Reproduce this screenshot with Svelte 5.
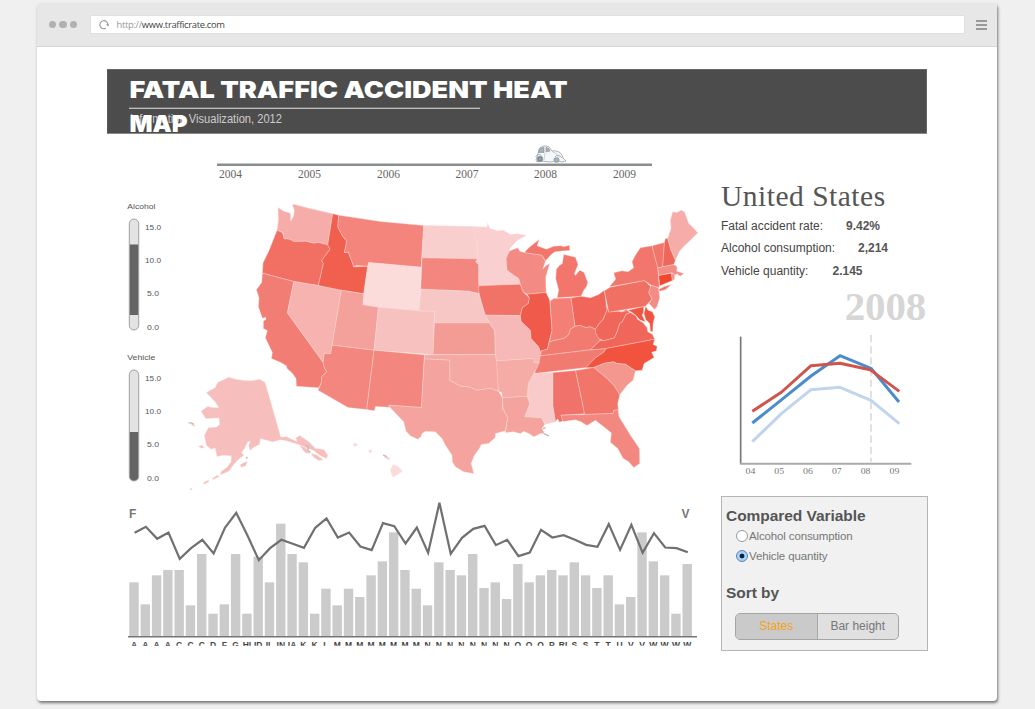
<script>
  // Each state: fill, x offset, y offset, outline points (thirds of a pixel).
  const states = [
    ['#f6adaa', 0, 0, '83,37 100,48 120,54 121,78 130,62 132,44 126,30 130,27 170,38 247,56 232,149 205,142 190,144 165,138 130,139 118,132 101,131 98,112 80,105 84,75'],
    ['#f27063', 0, 0, '80,105 96,112 101,131 118,132 130,139 165,138 190,144 205,142 232,149 239,162 214,196 219,205 204,271 130,259 36,234 38,203 55,168'],
    ['#f27d74', 0, 0, '36,234 130,259 111,353 218,501 222,518 229,530 214,544 213,562 205,578 138,573 137,550 126,534 110,520 108,512 90,501 63,490 66,472 45,428 51,406 39,400 39,378 47,372 46,366 36,369 24,335 26,308 18,284 34,262'],
    ['#f7b3af', 0, 0, '130,259 204,271 273,285 245,450 241,476 222,474 218,501 111,353'],
    ['#f15f4f', 0, 0, '247,56 265,60 262,95 276,122 289,138 282,172 294,171 303,195 310,215 352,213 340,296 273,285 204,271 219,205 214,196 239,162 232,149'],
    ['#f3857d', 0, 0, '265,60 390,79 520,91 512,216 355,202 352,213 318,211 310,215 303,195 294,171 282,172 289,138 276,122 262,95'],
    ['#fbdcda', 0, 0, '355,202 512,216 506,347 384,336 337,329 340,296 352,213'],
    ['#f4a19b', 0, 0, '273,285 340,296 337,329 384,336 371,465 245,450'],
    ['#f6c1be', 0, 0, '384,336 506,347 552,348 548,478 371,465'],
    ['#f3877f', 0, 0, '245,450 371,465 349,643 293,637 203,585 213,562 214,544 229,530 222,518 218,501 222,474 241,476'],
    ['#f3867e', 0, 0, '371,465 522,479 513,637 415,630 418,636 375,634 372,647 349,643'],
    ['#f9cfce', 0, 0, '520,91 668,94 680,150 682,191 515,188'],
    ['#f3877f', 0, 0, '515,188 682,191 676,200 685,208 686,295 670,292 655,288 511,282'],
    ['#f7c7c5', 0, 0, '511,282 655,288 670,292 686,295 693,320 703,355 717,383 552,383 552,348 506,347'],
    ['#f39c95', 0, 0, '552,383 717,383 724,394 733,405 735,478 548,478'],
    ['#f5a8a4', 0, 0, '522,479 735,478 741,500 744,588 720,579 702,582 680,585 655,575 630,573 612,563 598,556 598,495 522,491'],
    ['#f4a39e', 0, 0, '522,491 598,495 598,556 612,563 630,573 655,575 680,585 702,582 720,579 744,588 756,607 757,640 772,667 765,707 735,715 734,728 714,745 692,748 688,758 672,780 662,805 670,835 640,830 615,815 606,800 605,780 585,750 575,730 555,710 525,708 515,715 512,724 502,732 480,722 467,708 460,680 420,638 415,630 513,637'],
    ['#f9d0cf', 630, 0, '38,94 80,96 82,84 88,100 110,107 128,105 150,118 172,116 197,121 170,136 148,160 147,168 137,190 140,225 163,242 175,250 180,267 55,272 55,208 46,200 52,190 50,150 42,120'],
    ['#f17267', 630, 0, '55,272 180,267 188,290 207,308 204,325 186,337 180,361 75,360 63,320 55,290'],
    ['#f7b9b7', 630, 0, '75,360 180,361 182,378 210,405 212,430 235,455 243,478 236,500 222,505 220,490 108,497 105,478 103,405 94,394 87,383'],
    ['#f38b84', 630, 0, '147,168 160,162 172,158 178,168 192,172 245,180 255,198 247,222 256,212 268,205 256,245 257,292 200,297 188,290 180,267 175,250 163,242 140,225 137,190'],
    ['#f2766b', 630, 0, '192,172 205,158 236,133 230,152 258,162 280,153 302,152 310,155 327,150 328,166 310,167 283,170 270,180 262,190 255,197 245,180'],
    ['#f2766b', 630, 0, '310,178 345,186 353,208 342,235 345,241 358,225 371,232 382,262 378,275 370,285 362,303 290,308 295,285 286,250 288,222 297,211 306,205'],
    ['#f05a4a', 630, 0, '200,297 257,292 268,315 275,405 266,440 261,462 243,467 243,478 235,455 212,430 210,405 182,378 180,361 186,337 204,325 207,308'],
    ['#f37f77', 630, 0, '269,318 280,310 332,308 344,393 330,402 325,419 310,430 290,434 267,440 275,405'],
    ['#f1665a', 630, 0, '332,308 362,303 390,308 415,298 432,285 440,345 428,373 418,383 405,402 390,395 375,397 360,391 344,393'],
    ['#f27b71', 630, 0, '267,440 290,434 310,430 325,419 330,402 344,393 360,391 375,397 390,395 405,402 408,415 420,435 390,464 240,482 243,467 261,462'],
    ['#f27b71', 630, 0, '240,482 390,464 437,460 430,471 405,488 378,517 222,535 227,520 236,500'],
    ['#f1665a', 630, 0, '437,330 445,350 472,348 484,350 498,344 508,352 497,357 486,380 478,385 471,408 462,428 430,437 415,430 405,411 405,402 418,383 428,373 440,345'],
    ['#f1665a', 630, 0, '390,464 420,435 430,437 462,428 471,408 478,385 486,380 497,357 510,352 526,362 532,373 548,383 560,398 562,410 576,417 583,432 437,460'],
    ['#f15440', 630, 0, '484,350 550,334 549,352 545,360 555,380 538,374 528,362 514,351 498,344'],
    ['#f15440', 630, 0, '556,333 563,345 576,350 583,365 578,385 577,410 570,408 568,385 556,373 551,355'],
    ['#f1533e', 630, 375, '437,85 583,57 578,73 590,78 588,92 574,96 581,112 551,130 545,150 525,152 495,132 470,130 460,125 432,129 400,142 376,143 405,113 430,96'],
    ['#f4978f', 630, 375, '400,142 432,129 460,125 470,130 495,132 525,152 518,180 500,195 478,224 460,195 440,175'],
    ['#f2756a', 630, 375, '345,151 400,142 440,175 460,195 478,224 472,250 474,270 460,270 458,280 372,283 366,250'],
    ['#f1726a', 630, 375, '277,157 345,151 366,250 372,281 302,285 308,302 297,306 292,296 285,305 277,255'],
    ['#f8cbca', 630, 375, '220,160 277,157 277,255 285,305 255,312 243,293 193,290 208,250 200,225 204,190'],
    ['#f5aba6', 630, 375, '108,122 220,115 222,128 238,127 220,160 204,190 200,228 126,233 124,217 114,213'],
    ['#f4a39e', 630, 375, '126,233 200,228 208,250 193,290 243,293 253,312 245,325 252,340 240,340 220,350 207,341 190,333 180,340 160,335 135,337 142,293 128,265'],
    ['#f38880', 630, 375, '302,285 372,283 458,280 460,270 473,268 476,290 510,345 537,385 538,430 520,442 505,425 488,414 472,385 450,366 453,338 430,320 405,300 380,316 362,305 345,299 308,304'],
    ['#f17064', 630, 0, '432,287 449,276 552,256 572,275 565,292 575,312 555,333 445,351'],
    ['#f2766b', 630, 0, '447,275 466,252 460,233 485,227 503,230 520,218 515,200 525,180 540,158 575,152 592,215 594,240 597,278 572,270 552,256'],
    ['#f2766b', 630, 0, '595,283 612,274 632,268 616,283 598,288'],
    ['#f38c85', 630, 0, '572,270 594,278 598,308 590,334 583,343 566,325 575,312 565,292'],
    ['#f1756a', 630, 0, '575,152 612,142 607,215 592,218'],
    ['#f1665a', 630, 0, '612,142 615,130 622,130 632,165 645,195 640,208 607,215'],
    ['#f6adaa', 630, 0, '622,130 632,100 630,75 637,50 650,52 662,45 672,50 685,85 698,97 712,113 690,135 672,152 657,168 645,195 632,165'],
    ['#f38e87', 630, 0, '592,218 640,208 650,215 649,228 670,235 660,243 649,236 643,240 635,233 595,241'],
    ['#f0472f', 630, 0, '595,241 633,234 636,256 598,272'],
    ['#f38e87', 630, 0, '633,234 643,238 642,253 636,256'],
    ['#f6bfbd', -210, 510, '78,82 104,68 112,52 145,36 165,42 190,46 215,47 238,42 254,52 278,135 301,216 318,215 350,230 347,218 358,211 385,230 405,250 430,253 442,270 438,280 418,270 400,256 378,248 355,238 335,232 315,226 300,224 277,230 240,220 237,238 220,246 209,256 205,240 210,228 202,230 192,250 183,262 190,270 170,286 158,300 145,318 120,329 122,320 140,306 152,290 153,272 128,270 110,274 104,248 92,252 78,240 72,210 84,188 108,186 118,178 116,158 76,160 62,138 82,124 98,128 116,128 104,110'],
    ['#f6bfbd', -210, 510, '180,298 200,288 196,302 182,306'],
    ['#f6bfbd', -210, 510, '95,341 110,330 117,334 98,343'],
    ['#f6bfbd', -210, 510, '68,353 84,345 86,349 72,357'],
    ['#f6bfbd', -210, 510, '54,244 64,240 72,246 64,249'],
    ['#f6bfbd', -210, 510, '358,242 376,248 388,266 374,262'],
    ['#f6bfbd', -210, 510, '392,264 410,270 428,284 415,286 400,276'],
    ['#f6bfbd', -210, 510, '32,176 40,178 45,183 37,182'],
    ['#fadcdc', -210, 510, '630,316 638,298 652,303 666,318 638,336'],
    ['#f9d5d5', -210, 510, '517,239 524,234 532,239 525,243'],
    ['#f9d5d5', -210, 510, '565,256 572,254 574,261 568,263'],
    ['#f9d5d5', -210, 510, '610,275 620,274 630,280 622,284']
  ];

  const labels = 'A A A A C C C D F G HI ID IL IN IA K K L M M M M M M M M N N N N N N N N O O O P RI S S T T U V V W W W W'.split(' ');
  const bars = [262,328,241,225,225,331,177,356,328,177,356,185,262,86,177,202,356,281,331,281,306,241,199,112,225,281,331,202,225,241,177,279,262,312,207,262,241,225,241,202,241,279,241,328,306,112,199,241,356,207];
  const trend = [112,94,130,111,190,158,133,174,97,52,120,194,158,133,145,157,97,69,126,111,153,164,83,92,144,96,172,22,175,127,100,91,149,133,182,171,103,126,119,133,148,154,86,163,88,172,113,156,158,170];
  const bx = (i) => 134 + i * 11.29;
  const by = (v) => 495 + v / 3;
  const trendPoints = trend.map((v, i) => `${bx(i) + 0.6},${by(v) + 0.5}`).join(' ');

  const years = [[2004, 219], [2005, 298], [2006, 377], [2007, 455.5], [2008, 534], [2009, 613]];
  const sliders = [
    { name: 'Alcohol', y: 209, top: 219, from: 244.5, to: 314 },
    { name: 'Vehicle', y: 360, top: 370, from: 432, to: 480 }
  ];
  const ticks = ['15.0', '10.0', '5.0', '0.0'];
  const shortYears = ['04', '05', '06', '07', '08', '09'];
  let variable = $state('vehicle');
</script>

<div class="window">
  <div class="chrome">
    <div class="dots"><i></i><i></i><i></i></div>
    <div class="address">
      <svg width="10" height="10" viewBox="0 0 10 10"><path d="M6.8 8.2A4 4 0 1 1 8.9 4.6" fill="none" stroke="#999" stroke-width="1.1" /><path d="M7 4.3h3.4L8.8 6.6z" fill="#999" /></svg>
      <span class="url"><span>http://</span>www.trafficrate.com</span>
    </div>
    <div class="menu"><i></i><i></i><i></i></div>
  </div>

  <div class="content">
    <svg class="banner" width="820" height="65" viewBox="107 69 820 65">
      <defs>
        <pattern id="grain" width="4" height="4" patternUnits="userSpaceOnUse">
          <rect width="4" height="4" fill="#4c4c4c" /><path d="M0 3h1v1H0zM2 1h1v1H2z" fill="#505050" />
        </pattern>
      </defs>
      <rect x="107" y="69" width="820" height="64.5" fill="url(#grain)" />
      <rect x="107" y="69.3" width="819.6" height="64" fill="none" stroke="#777" stroke-width=".6" />
      <path d="M129 108.3H480" stroke="#e2e2e2" stroke-width="1.1" />
      <text x="130" y="122.5" class="sub" textLength="152" lengthAdjust="spacingAndGlyphs">Information Visualization, 2012</text>
      <text x="129.5" y="97.7" class="title" textLength="438" lengthAdjust="spacingAndGlyphs">FATAL TRAFFIC ACCIDENT HEAT</text>
      <text x="129.5" y="131.5" class="title" textLength="58" lengthAdjust="spacingAndGlyphs">MAP</text>
    </svg>

    <div class="columns">
      <div class="left">
        <svg class="timeline" width="606" height="56" viewBox="107 134 606 56">
          <path d="M217 164.7H652" stroke="#8b8e8e" stroke-width="2.6" />
          {#each years as [year, x]}
            <text {x} y="178" class="year" textLength="23" lengthAdjust="spacingAndGlyphs">{year}</text>
          {/each}
          <g stroke="#8d989f" stroke-width=".7" fill="#fff">
            <path d="M536 160l2-6 1-5q4-5 10-2l3 4q7-1 10 4l1 3 3 3-4 1-4-1-8 1-10-1-3 1z" fill="#f6f7f8" />
            <path d="M538.5 152.5l1.5-4q3-1.5 4-1v5zM546 147.5q3 0 4 3.5l-4 1z" fill="#a3b0bb" />
            <path d="M545 153l-1 7M552 151.5q5 1 7 6" fill="none" stroke="#b7bec3" />
            <path d="M535.5 157q3-5 7 0M555 157q3-4 7 1" fill="none" />
            <ellipse cx="540" cy="159" rx="2.8" ry="2.8" fill="#7b8d9a" /><ellipse cx="540" cy="159" rx=".7" ry=".8" />
            <ellipse cx="556.5" cy="160" rx="2.6" ry="2.4" fill="#a5b3bd" /><ellipse cx="556.5" cy="160" rx=".8" ry=".8" />
          </g>
        </svg>

        <div class="explore">
          <svg width="80" height="305" viewBox="107 190 80 305">
            {#each sliders as s, i}
              <text x="127.3" y={s.y} class="tiny name" textLength="28" lengthAdjust="spacingAndGlyphs">{s.name}</text>
              <clipPath id="pill{i}"><rect x="129.3" y={s.top} width="9.4" height="111" rx="4.7" /></clipPath>
              <rect x="129.3" y={s.top} width="9.4" height="111" rx="4.7" fill="#e3e3e3" />
              <rect x="129.3" y={s.from} width="9.4" height={s.to - s.from + 1} fill="#646464" clip-path="url(#pill{i})" />
              <rect x="129.3" y={s.top} width="9.4" height="111" rx="4.7" fill="none" stroke="#a0a0a0" />
              {#each ticks as t, k}
                <text x={k < 2 ? 145 : 147} y={s.top + 11 + k * 33.2} class="tiny" textLength={k < 2 ? 16 : 12} lengthAdjust="spacingAndGlyphs">{t}</text>
              {/each}
            {/each}
          </svg>
          <svg width="526" height="305" viewBox="187 190 526 305">
            <g transform="translate(250.4 195.2) scale(.33333)">
              {#each states as [fill, dx, dy, points]}
                <polygon {points} {fill} transform="translate({dx} {dy})" stroke="#fbd8d4" stroke-opacity=".6" stroke-width="2" stroke-linejoin="round" />
              {/each}
              <path d="M-186 683l8 0 8 4M-13 790l4-5M-180 882h4M168 750l6 6-2 8 8 8M398 780l12 4M878 700l8-3M880 715l16 7" fill="none" stroke="#bbb" stroke-width="4" />
            </g>
          </svg>
        </div>

        <svg width="606" height="157" viewBox="107 495 606 157">
          <text x="129" y="518" class="axis">F</text>
          <text x="681.5" y="518" class="axis">V</text>
          {#each bars as v, i}
            <rect x={bx(i) - 4.7} y={by(v)} width="9.4" height={636.5 - by(v)} fill="#cbcbcb" />
          {/each}
          <polyline points={trendPoints} fill="none" stroke="#707070" stroke-width="2.2" stroke-linejoin="miter" />
          <path d="M128 636.8H697" stroke="#777" stroke-width="1.6" />
          <clipPath id="labelClip"><rect x="120" y="640" width="590" height="5.8" /></clipPath>
          <g clip-path="url(#labelClip)">
            {#each labels as l, i}
              <text x={bx(i)} y="648.3" class="state" text-anchor="middle">{l}</text>
            {/each}
          </g>
        </svg>
      </div>

      <div class="right">
        <h1>United States</h1>
        <dl>
          <div class="r1"><dt>Fatal accident rate:</dt><dd>9.42%</dd></div>
          <div class="r2"><dt>Alcohol consumption:</dt><dd>2,214</dd></div>
          <div class="r3"><dt>Vehicle quantity:</dt><dd>2.145</dd></div>
        </dl>
        <div class="big">2008</div>
        <svg width="208" height="157" viewBox="720 328 208 157">
          <g transform="translate(700 325) scale(.33333)" fill="none" stroke-linejoin="round">
            <path d="M122 35V417" stroke="#777" stroke-width="5" />
            <path d="M120 416H634" stroke="#aaa" stroke-width="6" />
            <path d="M513 30V410" stroke="#d3d3d3" stroke-width="4" stroke-dasharray="22 11.5" />
            <path d="M157 350L245 265 333 194 420 187 513 226 598 296" stroke="#c0d5eb" stroke-width="9" />
            <path d="M157 294L245 224 333 153 420 92 513 130 597 231" stroke="#4a8dca" stroke-width="9" />
            <path d="M157 259L245 201 333 122 420 115 510 134 598 199" stroke="#cf554c" stroke-width="9" />
          </g>
          {#each shortYears as y, i}
            <text x={745.5 + i * 28.8} y="473.8" class="short" textLength="9.8" lengthAdjust="spacingAndGlyphs">{y}</text>
          {/each}
        </svg>
        <div class="panel">
          <h2 class="cv">Compared Variable</h2>
          <button class="opt a" onclick={() => (variable = 'alcohol')}><b class:on={variable === 'alcohol'}></b><span>Alcohol consumption</span></button>
          <button class="opt v" onclick={() => (variable = 'vehicle')}><b class:on={variable === 'vehicle'}></b><span>Vehicle quantity</span></button>
          <h2 class="sb">Sort by</h2>
          <div class="seg"><span class="active">States</span><span>Bar height</span></div>
        </div>
      </div>
    </div>
  </div>
</div>

<style>
  :global(body) { background: #f0f0f0; min-height: 709px; display: flow-root; }
  * { box-sizing: border-box; }
  svg { display: block; flex: none; }
  .window { width: 960px; height: 698px; margin: 3px 0 0 37px; background: #fff; border-radius: 4px; box-shadow: 1px 2px 3px #777; overflow: hidden; font-family: "Liberation Sans", Arial, sans-serif; }
  .chrome { height: 44px; background: #e7e7e7; border-bottom: 1px solid #d5d5d5; display: flex; align-items: center; padding-left: 11.5px; }
  .dots { display: flex; gap: 3.3px; width: 41px; }
  .dots i { width: 7.4px; height: 7.4px; border-radius: 50%; background: #b1b1b1; }
  .address { width: 875px; height: 19px; background: #fff; border: 1px solid #e0e0e0; display: flex; align-items: center; padding-left: 8px; }
  .url { font: 9.4px "Open Sans", sans-serif; color: #444; margin-left: 8px; letter-spacing: -.31px; white-space: nowrap; }
  .url span { color: #999; }
  .menu { margin-left: 11px; display: flex; flex-direction: column; gap: 2px; }
  .menu i { width: 11px; height: 2px; background: #999; }
  .content { padding: 22px 0 0 70px; }
  .columns { display: flex; width: 821px; gap: 7px; margin-top: -1px; padding-top: 1px; }
  .left { width: 606px; flex: none; }
  .explore { display: flex; }
  .title { font: 900 23.4px Inter, "Liberation Sans", sans-serif; fill: #fff; }
  .sub { font: 12px "Liberation Sans", Arial, sans-serif; fill: #ccc; }
  .year { font: 12px "Liberation Serif", serif; fill: #666; }
  .short { font: 9px "Liberation Serif", serif; fill: #777; }
  .tiny { font: 8px "Liberation Sans", Arial, sans-serif; fill: #555; }
  .axis { font: bold 12px "Liberation Sans", Arial, sans-serif; fill: #777; }
  .state { font: bold 8.5px "Liberation Sans", Arial, sans-serif; fill: #444; }
  .right { width: 208px; }
  h1 { font: 29.5px/34px "Liberation Serif", serif; color: #555; margin: 45px 0 0 1px; white-space: nowrap; letter-spacing: .5px; }
  dl { margin: 2px 0 0 1px; font-size: 12px; color: #444; }
  dl div { display: flex; height: 22.3px; line-height: 22.3px; white-space: nowrap; }
  dt { letter-spacing: 0; }
  dd { margin: 0; font-weight: bold; color: #555; }
  .r1 dt { width: 125px; } .r2 dt { width: 137px; } .r3 dt { width: 111.5px; }
  .big { font: bold 41px/46px "Liberation Serif", serif; color: #d6d6d6; text-align: right; height: 46px; padding: 1px 2px 0 0; letter-spacing: -.2px; }
  .panel { width: 207px; height: 155px; margin: 11.5px 0 0 1px; background: #f1f1f1; border: 1.5px solid #b5b5b5; padding: 8px 0 0 4px; color: #555; }
  h2 { margin: 0; font-size: 15.5px; line-height: 21px; letter-spacing: -.05px; }
  .opt { display: flex; align-items: center; height: 20px; border: 0; padding: 0 0 0 10px; background: none; font: 11.5px "Liberation Sans", Arial, sans-serif; letter-spacing: -.14px; color: #777; white-space: nowrap; }
  .opt b { width: 12px; height: 12px; border: 1px solid #999; border-radius: 50%; background: #fff; margin-right: 1px; }
  .opt b.on { background: radial-gradient(circle, #123 0 2px, #a9d2fa 2.8px 5px); border-color: #5984b5; }
  .sb { margin-top: 16px; }
  .seg { width: 164px; height: 27px; margin: 10px 0 0 9px; border: 1.5px solid #a5a5a5; border-radius: 5px; display: flex; overflow: hidden; font-size: 12px; line-height: 25px; text-align: center; color: #777; background: #e0e0e0; }
  .seg span { flex: 1; white-space: nowrap; }
  .seg .active { background: #cacaca; color: #f7a11a; border-right: 1px solid #aaa; }
</style>
